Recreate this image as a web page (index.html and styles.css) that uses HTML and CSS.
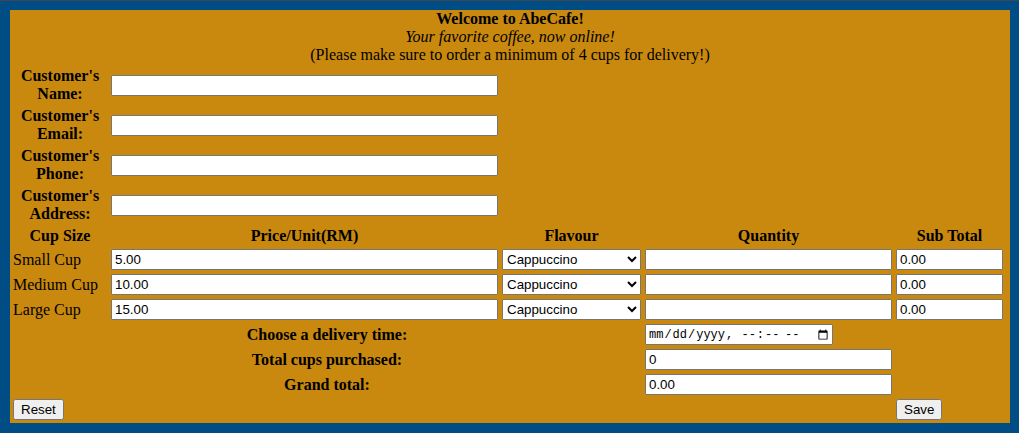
FILE: index.html
```html
<!DOCTYPE html>
<html lang="en-GB">
<head>
<meta charset="utf-8">
<title>AbeCafe</title>
<link rel="stylesheet" href="styles.css">
</head>
<body>
<div class="frame">
  <form class="cafe">
    <div class="intro">
      <div class="title">Welcome to AbeCafe!</div>
      <div class="tag">Your favorite coffee, now online!</div>
      <div>(Please make sure to order a minimum of 4 cups for delivery!)</div>
    </div>
    <table class="order">
      <colgroup>
        <col class="c1"><col class="c2"><col class="c3"><col class="c4"><col class="c5">
      </colgroup>
      <tr>
        <th>Customer's Name:</th>
        <td><input type="text" class="field"></td>
        <td colspan="3"></td>
      </tr>
      <tr>
        <th>Customer's Email:</th>
        <td><input type="text" class="field"></td>
        <td colspan="3"></td>
      </tr>
      <tr>
        <th>Customer's Phone:</th>
        <td><input type="text" class="field"></td>
        <td colspan="3"></td>
      </tr>
      <tr>
        <th>Customer's Address:</th>
        <td><input type="text" class="field"></td>
        <td colspan="3"></td>
      </tr>
      <tr>
        <th>Cup Size</th>
        <th>Price/Unit(RM)</th>
        <th>Flavour</th>
        <th>Quantity</th>
        <th>Sub Total</th>
      </tr>
      <tr>
        <td class="cup">Small Cup</td>
        <td><input type="text" class="field" value="5.00"></td>
        <td><select class="flavour"><option>Cappuccino</option><option>Latte</option><option>Mocha</option></select></td>
        <td><input type="text" class="field"></td>
        <td><input type="text" class="field" value="0.00"></td>
      </tr>
      <tr>
        <td class="cup">Medium Cup</td>
        <td><input type="text" class="field" value="10.00"></td>
        <td><select class="flavour"><option>Cappuccino</option><option>Latte</option><option>Mocha</option></select></td>
        <td><input type="text" class="field"></td>
        <td><input type="text" class="field" value="0.00"></td>
      </tr>
      <tr>
        <td class="cup">Large Cup</td>
        <td><input type="text" class="field" value="15.00"></td>
        <td><select class="flavour"><option>Cappuccino</option><option>Latte</option><option>Mocha</option></select></td>
        <td><input type="text" class="field"></td>
        <td><input type="text" class="field" value="0.00"></td>
      </tr>
      <tr>
        <th colspan="3">Choose a delivery time:</th>
        <td><input type="datetime-local" class="when"></td>
        <td></td>
      </tr>
      <tr>
        <th colspan="3">Total cups purchased:</th>
        <td><input type="text" class="field" value="0"></td>
        <td></td>
      </tr>
      <tr>
        <th colspan="3">Grand total:</th>
        <td><input type="text" class="field" value="0.00"></td>
        <td></td>
      </tr>
      <tr>
        <td><button type="reset" class="btn">Reset</button></td>
        <td colspan="3"></td>
        <td><button type="button" class="btn">Save</button></td>
      </tr>
    </table>
  </form>
</div>
</body>
</html>
```

FILE: styles.css
```css
html, body {
  margin: 0;
  padding: 0;
}
body {
  background: #004d86;
  font-family: "Liberation Serif", "Times New Roman", serif;
  font-size: 16px;
  line-height: 18px;
  color: #000;
}
.frame {
  border-top: 1px solid #3e4650;
  padding: 9px 9px 10px 10px;
}
.cafe {
  display: block;
  width: 1000px;
  background: #c8890e;
  margin: 0;
}
.intro {
  text-align: center;
}
.title {
  font-weight: bold;
}
.tag {
  font-style: italic;
}
.order {
  table-layout: fixed;
  width: 996px;
  border-collapse: separate;
  border-spacing: 2px;
}
.c1 { width: 96px; }
.c2 { width: 389px; }
.c3 { width: 141px; }
.c4 { width: 249px; }
.c5 { width: 109px; }
.order th, .order td {
  padding: 1px;
  box-sizing: border-box;
  vertical-align: middle;
}
.order th {
  font-weight: bold;
  text-align: center;
}
.order td.cup {
  text-align: left;
}
.field, .flavour, .when {
  display: block;
  box-sizing: border-box;
  height: 21px;
  margin: 0;
  font-family: "Liberation Sans", Arial, sans-serif;
  font-size: 13.333px;
}
.field {
  width: 100%;
}
.flavour {
  width: 139px;
}
.when {
  width: 188px;
  font-family: "Liberation Mono", "DejaVu Sans Mono", monospace;
  font-size: 12px;
}
.btn {
  font-family: "Liberation Sans", Arial, sans-serif;
  font-size: 13.333px;
  margin: 0;
  height: 21px;
}
```
